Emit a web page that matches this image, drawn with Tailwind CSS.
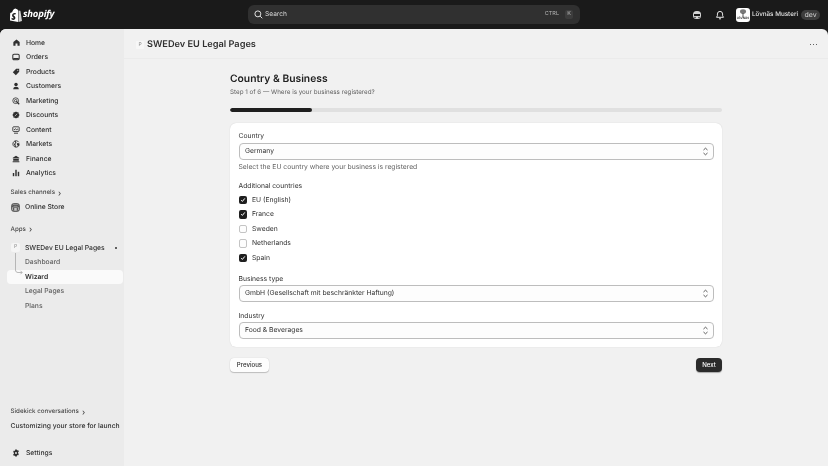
<!DOCTYPE html>
<html><head><meta charset="utf-8"><script src="https://cdn.jsdelivr.net/npm/@tailwindcss/browser@4"></script></head>
<body class="m-0">
<div class="w-[828px] h-[466px] overflow-hidden bg-[#1a1a1a] flex flex-col font-['Inter',sans-serif] text-[#303030] [text-rendering:geometricPrecision] antialiased blur-[0.3px]">
  <header class="h-[29px] shrink-0 flex items-center relative">
    <div class="w-[124px] pl-[10px] flex items-center gap-[1px] text-white">
      <svg class="w-[12px] h-[14px]" viewBox="0 0 12 14"><path fill="#fff" d="M8.7 2.4 8 2.6C7.8 1.900 7.400 1.100 6.400 1.100 6.100.7 5.800.5 5.500.5 3.400.5 2.500 3 2.100 4.300l-1.400.4C.3 4.900.3 4.900.2 5.300L-.1 12.400 8.200 14V2.500z"/><path fill="#d0d0d0" d="M8.600 2.400v11.500L12 13.100 10.400 3.100c-.1-.2-.2-.3-.4-.3z"/><path fill="#1a1a1a" d="M5.800 5.300 5.400 6.600s-.5-.2-1-.2c-.8 0-.9.5-.9.6 0 .7 1.900 1 1.900 2.700 0 1.300-.8 2.200-2 2.200-1.400 0-2-.9-2-.9l.4-1.200s.7.6 1.300.6c.4 0 .5-.3.500-.5 0-.9-1.500-1-1.500-2.500 0-1.300.9-2.500 2.700-2.500.7 0 1 .2 1 .2z"/></svg>
      <span class="text-[9.5px] font-bold italic tracking-[-0.2px] font-['Open_Sans',sans-serif]">shopify</span>
    </div>
    <div class="absolute left-[248px] top-[5px] w-[332px] h-[19px] rounded-[6px] bg-[#303030] flex items-center pl-[6px] pr-[7px] text-[#d4d4d4]">
      <svg class="w-[9px] h-[9px] mr-[2px]" viewBox="0 0 10 10" fill="none" stroke="#e3e3e3" stroke-width="1.100"><circle cx="4.300" cy="4.300" r="3.300"/><path d="m6.800 6.800 2.400 2.400"/></svg>
      <span class="text-[6.6px]">Search</span>
      <span class="ml-auto text-[5.5px] text-[#b5b5b5]">CTRL</span>
      <span class="ml-[6px] text-[5.5px] text-[#b5b5b5] w-[8px] h-[9px] leading-[9px] text-center rounded-[2px] bg-[#3d3d3d]">K</span>
    </div>
    <div class="ml-auto flex items-center pr-[8px]">
      <svg class="w-[10px] h-[10px] mr-[13px]" viewBox="0 0 10 10"><rect x="1" y="1" width="8" height="8" rx="3.500" fill="#d4d4d4"/><rect x="2" y="4" width="6" height="2" fill="#1a1a1a"/><circle cx="3" cy="7.400" r=".7" fill="#1a1a1a"/><circle cx="7" cy="7.400" r=".7" fill="#1a1a1a"/></svg>
      <svg class="w-[10px] h-[10px] mr-[11px]" viewBox="0 0 10 10" fill="none" stroke="#e3e3e3" stroke-width="1"><path d="M1.500 7.300h7L7.600 5.800V4a2.600 2.600 0 0 0-5.200 0v1.800z"/><path d="M4 8.800h2"/></svg>
      <div class="w-[14px] h-[14px] rounded-[3px] bg-white mr-[2px] flex flex-col items-center justify-center overflow-hidden">
        <svg class="w-[8px] h-[8px]" viewBox="0 0 8 8"><ellipse cx="4" cy="2.600" rx="3" ry="2.300" fill="#777"/><rect x="3.500" y="4" width="1" height="4" fill="#555"/></svg>
        <span class="text-[3px] leading-[3px] font-bold text-[#333]">LÖVNÄS</span>
      </div>
      <span class="text-[6.3px] font-medium text-[#e3e3e3]">Lövnäs Musteri</span>
      <span class="ml-[3px] w-[19px] text-center h-[10px] leading-[10px] rounded-[5px] bg-[#3d3d3d] text-[7px] text-[#d4d4d4]">dev</span>
    </div>
  </header>
  <div class="flex-1 flex rounded-t-[6px] overflow-hidden bg-[#f1f1f1] min-h-0">
    <aside class="w-[124px] shrink-0 bg-[#ebebeb] flex flex-col pt-[6.5px] pb-[6px] pl-[7px] pr-[1px] text-[6.75px] font-medium">
      <nav class="flex flex-col">
        <a class="h-[14.5px] flex items-center gap-[6px] pl-[5px]"><svg class="w-[7px] h-[7px] ml-[.5px] mr-[.5px] shrink-0" viewBox="0 0 10 10" fill="#303030"><path d="M5 .8 9.500 4.400V9.500H6.400V6.300H3.600V9.500H.5V4.400z"/></svg>Home</a>
        <a class="h-[14.5px] flex items-center gap-[6px] pl-[5px]"><svg class="w-[8px] h-[8px] shrink-0" viewBox="0 0 10 10" fill="none" stroke="#303030" stroke-width="1.300"><rect x="1" y="1.500" width="8" height="7" rx="1.500"/><path d="M1.500 6.400h7v1.800h-7z" fill="#303030" stroke="none"/></svg>Orders</a>
        <a class="h-[14.5px] flex items-center gap-[6px] pl-[5px]"><svg class="w-[8px] h-[8px] shrink-0" viewBox="0 0 10 10" fill="#303030"><path d="M5.200 1H9v3.800L4.800 9 1 5.200zM7.200 2.100a.7.7 0 1 0 0 1.400.7.7 0 0 0 0-1.400z"/></svg>Products</a>
        <a class="h-[14.5px] flex items-center gap-[6px] pl-[5px]"><svg class="w-[8px] h-[8px] shrink-0" viewBox="0 0 10 10" fill="#303030"><circle cx="5" cy="3" r="2.200"/><path d="M1.500 9c0-2.200 1.500-3.200 3.500-3.200S8.500 6.800 8.500 9z"/></svg>Customers</a>
        <a class="h-[14.5px] flex items-center gap-[6px] pl-[5px]"><svg class="w-[8px] h-[8px] shrink-0" viewBox="0 0 10 10" fill="none" stroke="#303030" stroke-width="1"><circle cx="4.600" cy="4.600" r="3.600"/><circle cx="4.600" cy="4.600" r="1.500"/><path d="m5.500 5.500 3.500 3.500" stroke-width="1.600"/></svg>Marketing</a>
        <a class="h-[14.5px] flex items-center gap-[6px] pl-[5px]"><svg class="w-[8px] h-[8px] shrink-0" viewBox="0 0 10 10"><path fill="#303030" d="M5 .5 6.300 1.500 8 1.600 8.400 3.300 9.500 5 8.400 6.700 8 8.400 6.300 8.500 5 9.500 3.700 8.500 2 8.400 1.600 6.700.5 5l1.100-1.700L2 1.600l1.700-.1z"/><path stroke="#ebebeb" stroke-width=".8" d="m3.500 6.500 3-3"/></svg>Discounts</a>
        <a class="h-[14.5px] flex items-center gap-[6px] pl-[5px]"><svg class="w-[8px] h-[8px] shrink-0" viewBox="0 0 10 10" fill="none" stroke="#303030" stroke-width="1.100"><rect x="1" y="1" width="8" height="5.800" rx="1"/><path d="M2.500 9h5M2.500 5l1.700-1.500L5.500 4.500 6.500 3.800 8 5"/></svg>Content</a>
        <a class="h-[14.5px] flex items-center gap-[6px] pl-[5px]"><svg class="w-[8px] h-[8px] shrink-0" viewBox="0 0 10 10" fill="none" stroke="#303030" stroke-width="1.100"><path d="M8.500 2.800A4 4 0 1 0 8.800 6.500"/><path d="M4 1.200 5 3.500 3 5 4.500 8.800M6.500 4.500l2.500.3-.7 2.200-1.300-.5z" fill="#303030"/></svg>Markets</a>
        <a class="h-[14.5px] flex items-center gap-[6px] pl-[5px]"><svg class="w-[8px] h-[8px] shrink-0" viewBox="0 0 10 10" fill="#303030"><path d="M5 1 9 3.300V4.300H1V3.300zM1.500 5h7v2.200h-7zM.8 7.800h8.400V9H.8z"/></svg>Finance</a>
        <a class="h-[14.5px] flex items-center gap-[6px] pl-[5px]"><svg class="w-[8px] h-[8px] shrink-0" viewBox="0 0 10 10" fill="#303030"><rect x="1" y="5" width="1.800" height="4"/><rect x="4.100" y="1" width="1.800" height="8"/><rect x="7.200" y="3.500" width="1.800" height="5.500"/></svg>Analytics</a>
      </nav>
      <div class="mt-[5px] h-[14.5px] flex items-center gap-[3px] pl-[3.5px] text-[6.2px] text-[#4a4a4a]">Sales channels <span class="text-[8px] leading-none">›</span></div>
      <a class="h-[14.5px] flex items-center gap-[5px] pl-[4px]"><svg class="w-[9px] h-[9px] shrink-0" viewBox="0 0 10 10" fill="none" stroke="#303030" stroke-width="1"><rect x=".8" y=".8" width="8.400" height="8.400" rx="2" fill="#c9c9c9"/><path d="M2 2.500h6v2H2zM3 5.500v3M7 5.500v3"/></svg>Online Store</a>
      <div class="mt-[7.5px] h-[14.5px] flex items-center gap-[3px] pl-[3.5px] text-[6.2px] text-[#4a4a4a]">Apps <span class="text-[8px] leading-none">›</span></div>
      <div class="mt-[4px] h-[14.5px] flex items-center gap-[5px] pl-[4px] pr-[6px] whitespace-nowrap">
        <span class="w-[9px] h-[9px] rounded-[2px] bg-[#f5f5f5] text-[5px] leading-[9px] text-center text-[#999] shrink-0">P</span>SWEDev EU Legal Pages
        <span class="ml-auto w-[2px] h-[2px] rounded-full bg-[#303030]"></span>
      </div>
      <div class="relative">
        <div class="h-[14.5px] flex items-center pl-[18px] text-[#616161]">Dashboard</div>
        <div class="h-[14.5px] flex items-center pl-[18px] bg-[#fafafa] rounded-[4px] font-semibold text-[#303030]">Wizard</div>
        <div class="h-[14.5px] flex items-center pl-[18px] text-[#616161]">Legal Pages</div>
        <div class="h-[14.5px] flex items-center pl-[18px] text-[#616161]">Plans</div>
        <svg class="absolute left-[8px] -top-[2px] w-[14px] h-[24px]" viewBox="0 0 14 24" fill="none" stroke="#a8a8a8" stroke-width=".8"><path d="M.5 0v17c0 1.500 1 2.500 2.500 2.500h4M5.500 17.800l1.700 1.700-1.700 1.700"/></svg>
      </div>
      <div class="mt-auto h-[14.5px] flex items-center gap-[3px] pl-[3.5px] text-[6.2px] text-[#4a4a4a]">Sidekick conversations <span class="text-[8px] leading-none">›</span></div>
      <div class="h-[14.5px] flex items-center pl-[3.5px] whitespace-nowrap">Customizing your store for launch</div>
      <a class="mt-[12px] h-[14.5px] flex items-center gap-[6px] pl-[5px]"><svg class="w-[8px] h-[8px] shrink-0" viewBox="0 0 10 10"><path fill="#303030" d="M4 .6h2l.3 1.300 1.300-.5 1 1.700-1 .9v1.400l1 .9-1 1.700-1.300-.5L6 9.400H4l-.3-1.300-1.300.5-1-1.700 1-.9V4.600l-1-.9 1-1.700 1.300.5z"/><circle cx="5" cy="5" r="1.200" fill="#ebebeb"/></svg>Settings</a>
    </aside>
    <main class="flex-1 flex flex-col min-w-0">
      <div class="h-[30px] pt-[2px] shrink-0 flex items-center pl-[12px] pr-[11px] border-b border-[#ebebeb]">
        <span class="w-[8px] h-[8px] rounded-[1px] bg-[#f7f7f7] text-[5px] leading-[8px] text-center text-[#8a8a8a] mr-[3px]">P</span>
        <h1 class="text-[9.2px] font-semibold text-[#303030]">SWEDev EU Legal Pages</h1>
        <div class="ml-auto flex gap-[1.5px]"><i class="w-[1.5px] h-[1.5px] rounded-full bg-[#303030]"></i><i class="w-[1.5px] h-[1.5px] rounded-full bg-[#303030]"></i><i class="w-[1.5px] h-[1.5px] rounded-full bg-[#303030]"></i></div>
      </div>
      <div class="w-[492px] ml-[106px] pt-[11.5px]">
        <h2 class="text-[10.3px] leading-[16px] font-semibold text-[#202020]">Country &amp; Business</h2>
        <p class="text-[6.25px] leading-[10px] text-[#616161] mt-[.5px]">Step 1 of 6 — Where is your business registered?</p>
        <div class="mt-[10.5px] h-[4px] rounded-full bg-[#e0e0e0] overflow-hidden"><div class="h-full w-[82px] bg-[#1f1f1f] rounded-full"></div></div>
        <section class="mt-[11.5px] bg-white rounded-[6px] h-[224px] px-[8.5px] pt-[7.5px] shadow-[0_0_1px_rgba(0,0,0,.2)] text-[6.75px]">
          <label class="block h-[10px] leading-[10px]">Country</label>
          <div class="mt-[2px] h-[17.5px] rounded-[4px] bg-[#fdfdfd] border border-[#bdbdbd] flex items-center pl-[5.5px] pr-[4px]">Germany<svg class="ml-auto w-[7px] h-[9px]" viewBox="0 0 7 9" fill="none" stroke="#4a4a4a" stroke-width=".9"><path d="m1.500 3 2-1.800 2 1.800M1.500 6l2 1.800 2-1.800"/></svg></div>
          <p class="mt-[1.5px] h-[10px] leading-[10px] text-[#616161]">Select the EU country where your business is registered</p>
          <label class="block mt-[9px] h-[10px] leading-[10px]">Additional countries</label>
          <div class="mt-[2px] flex flex-col">
            <div class="h-[14.5px] flex items-center gap-[5px]"><span class="w-[8.5px] h-[8.5px] rounded-[2px] bg-[#1f1f1f] flex items-center justify-center"><svg class="w-[6px] h-[6px]" viewBox="0 0 6 6" fill="none" stroke="#fff" stroke-width="1"><path d="m1.200 3.200 1.200 1.200 2.400-3"/></svg></span>EU (English)</div>
            <div class="h-[14.5px] flex items-center gap-[5px]"><span class="w-[8.5px] h-[8.5px] rounded-[2px] bg-[#1f1f1f] flex items-center justify-center"><svg class="w-[6px] h-[6px]" viewBox="0 0 6 6" fill="none" stroke="#fff" stroke-width="1"><path d="m1.200 3.200 1.200 1.200 2.400-3"/></svg></span>France</div>
            <div class="h-[14.5px] flex items-center gap-[5px]"><span class="w-[8.5px] h-[8.5px] rounded-[2px] bg-[#fdfdfd] border border-[#c4c4c4]"></span>Sweden</div>
            <div class="h-[14.5px] flex items-center gap-[5px]"><span class="w-[8.5px] h-[8.5px] rounded-[2px] bg-[#fdfdfd] border border-[#c4c4c4]"></span>Netherlands</div>
            <div class="h-[14.5px] flex items-center gap-[5px]"><span class="w-[8.5px] h-[8.5px] rounded-[2px] bg-[#1f1f1f] flex items-center justify-center"><svg class="w-[6px] h-[6px]" viewBox="0 0 6 6" fill="none" stroke="#fff" stroke-width="1"><path d="m1.200 3.200 1.200 1.200 2.400-3"/></svg></span>Spain</div>
          </div>
          <label class="block mt-[8.5px] h-[10px] leading-[10px]">Business type</label>
          <div class="mt-[1.5px] h-[17px] rounded-[4px] bg-[#fdfdfd] border border-[#bdbdbd] flex items-center pl-[5.5px] pr-[4px]">GmbH (Gesellschaft mit beschränkter Haftung)<svg class="ml-auto w-[7px] h-[9px]" viewBox="0 0 7 9" fill="none" stroke="#4a4a4a" stroke-width=".9"><path d="m1.500 3 2-1.800 2 1.800M1.500 6l2 1.800 2-1.800"/></svg></div>
          <label class="block mt-[8.5px] h-[10px] leading-[10px]">Industry</label>
          <div class="mt-[1.5px] h-[17px] rounded-[4px] bg-[#fdfdfd] border border-[#bdbdbd] flex items-center pl-[5.5px] pr-[4px]">Food &amp; Beverages<svg class="ml-auto w-[7px] h-[9px]" viewBox="0 0 7 9" fill="none" stroke="#4a4a4a" stroke-width=".9"><path d="m1.500 3 2-1.800 2 1.800M1.500 6l2 1.800 2-1.800"/></svg></div>
        </section>
        <div class="mt-[11px] flex justify-between text-[6.1px] font-medium">
          <button class="h-[14px] w-[39px] rounded-[4px] bg-[#fdfdfd] shadow-[0_1px_1px_rgba(0,0,0,.2),0_0_1px_rgba(0,0,0,.2)] text-[#303030]">Previous</button>
          <button class="h-[14px] w-[26px] rounded-[4px] bg-[#2b2b2b] text-white shadow-[0_1px_1px_rgba(0,0,0,.3)]">Next</button>
        </div>
      </div>
    </main>
  </div>
</div>
</body></html>
